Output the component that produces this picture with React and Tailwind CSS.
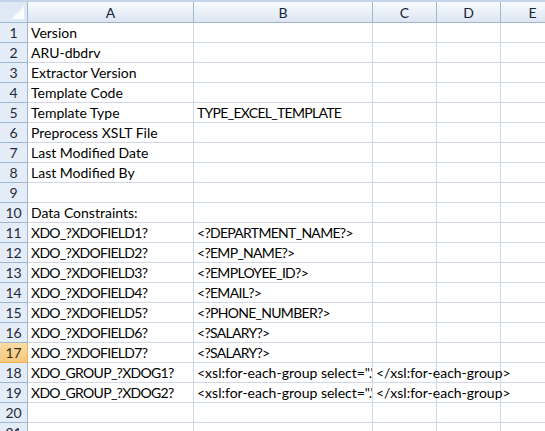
const cols = [
  { key: 'A', w: 'w-[166px]' },
  { key: 'B', w: 'w-[179px]' },
  { key: 'C', w: 'w-[64px]' },
  { key: 'D', w: 'w-[64px]' },
  { key: 'E', w: 'w-[64px]' },
];

// row data: [A, B, C]
const rows = [
  ['Version', '', ''],
  ['ARU-dbdrv', '', ''],
  ['Extractor Version', '', ''],
  ['Template Code', '', ''],
  ['Template Type', 'TYPE_EXCEL_TEMPLATE', ''],
  ['Preprocess XSLT File', '', ''],
  ['Last Modified Date', '', ''],
  ['Last Modified By', '', ''],
  ['', '', ''],
  ['Data Constraints:', '', ''],
  ['XDO_?XDOFIELD1?', '<?DEPARTMENT_NAME?>', ''],
  ['XDO_?XDOFIELD2?', '<?EMP_NAME?>', ''],
  ['XDO_?XDOFIELD3?', '<?EMPLOYEE_ID?>', ''],
  ['XDO_?XDOFIELD4?', '<?EMAIL?>', ''],
  ['XDO_?XDOFIELD5?', '<?PHONE_NUMBER?>', ''],
  ['XDO_?XDOFIELD6?', '<?SALARY?>', ''],
  ['XDO_?XDOFIELD7?', '<?SALARY?>', ''],
  ['XDO_GROUP_?XDOG1?', '<xsl:for-each-group select="."', '</xsl:for-each-group>'],
  ['XDO_GROUP_?XDOG2?', '<xsl:for-each-group select="."', '</xsl:for-each-group>'],
  ['', '', ''],
  ['', '', ''],
];

const font = "font-['Lato','Liberation_Sans',sans-serif]";

// Lato caps run wider than Calibri's, so tighten mostly-uppercase strings
const isCaps = (t) => t.replace(/[^A-Za-z]/g, '').match(/^[A-Z]+$/);

function Cell({ w, text, overflow }) {
  return (
    <div className={`${w} h-[20px] shrink-0 border-r border-b border-[#d0d7e5] bg-white relative`}>
      {text && (
        <span
          className={`absolute left-[3px] top-0 h-[19px] flex items-center whitespace-nowrap text-[14px] text-black z-10 ${
            overflow ? '' : 'overflow-hidden right-0'
          } ${isCaps(text) ? 'tracking-[-0.7px]' : ''}`}
        >
          {text}
        </span>
      )}
    </div>
  );
}

export default function App() {
  return (
    <div className={`w-[545px] h-[431px] overflow-hidden bg-white ${font}`}>
      <div className="w-[600px]">
        {/* top strip */}
        <div className="h-[2px] bg-[#c3d4ea]" />
        {/* column headers */}
        <div className="flex">
          <div className="w-[28px] h-[21px] shrink-0 border-r border-b border-[#9eb6ce] bg-[#dfe8f5] relative">
            <svg className="absolute right-[3px] bottom-[3px]" width="13" height="13" viewBox="0 0 13 13">
              <defs>
                <linearGradient id="tri" x1="0" y1="0" x2="1" y2="1">
                  <stop offset="0" stopColor="#eef3fa" />
                  <stop offset="1" stopColor="#ffffff" />
                </linearGradient>
              </defs>
              <polygon points="13,0 13,13 0,13" fill="url(#tri)" />
            </svg>
          </div>
          {cols.map((c) => (
            <div
              key={c.key}
              className={`${c.w} h-[21px] shrink-0 border-r border-b border-[#9eb6ce] bg-gradient-to-b from-[#f9fbfd] to-[#dce5f2] flex items-center justify-center text-[14px] text-[#15243a]`}
            >
              {c.key}
            </div>
          ))}
        </div>
        {/* rows */}
        {rows.map((r, i) => {
          const sel = i === 16;
          return (
            <div key={i} className="flex">
              <div
                className={`w-[28px] h-[20px] shrink-0 border-r border-b flex items-center justify-center text-[14px] ${
                  sel
                    ? 'bg-gradient-to-b from-[#fbdba4] to-[#f6c87c] border-[#f1b35a] text-[#3a2c10]'
                    : 'bg-[#e4ecf7] border-[#9eb6ce] text-[#1f2a3a]'
                }`}
              >
                {i + 1}
              </div>
              <Cell w={cols[0].w} text={r[0]} />
              <Cell w={cols[1].w} text={r[1]} />
              <Cell w={cols[2].w} text={r[2]} overflow />
              <Cell w={cols[3].w} text="" />
              <Cell w={cols[4].w} text="" />
            </div>
          );
        })}
      </div>
    </div>
  );
}
